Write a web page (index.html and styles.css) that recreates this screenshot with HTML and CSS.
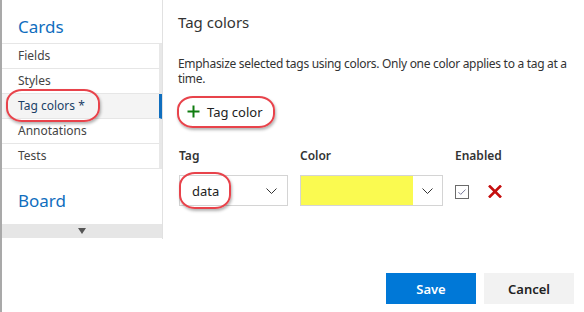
FILE: index.html
```html
<!DOCTYPE html>
<html lang="en">
<head>
    <meta charset="UTF-8">
    <meta name="viewport" content="width=device-width, initial-scale=1.0">
    <title>Settings - Tag colors</title>
    <link rel="stylesheet" href="styles.css">
</head>
<body>
    <div class="frame">
        <aside class="sidebar">
            <h2 class="nav-title">Cards</h2>
            <ul class="nav-list">
                <li>Fields</li>
                <li>Styles</li>
                <li class="selected"><span class="marked">Tag colors *</span></li>
                <li>Annotations</li>
                <li>Tests</li>
            </ul>
            <h2 class="nav-title board">Board</h2>
            <div class="scroll-down"><span class="arrow"></span></div>
        </aside>

        <main class="content">
            <h1>Tag colors</h1>
            <p class="desc">Emphasize selected tags using colors. Only one color applies to a tag at a time.</p>

            <div class="add-row">
                <button class="add-btn marked">
                    <svg width="13" height="13" viewBox="0 0 13 13">
                        <path d="M6.5 0.5v12M0.5 6.5h12" stroke="#107c10" stroke-width="2" fill="none"/>
                    </svg>
                    <span>Tag color</span>
                </button>
            </div>

            <div class="rules">
                <div class="col-label">Tag</div>
                <div class="col-label">Color</div>
                <div class="col-label">Enabled</div>

                <div class="select">
                    <span class="marked">data</span>
                    <svg class="chevron" width="11" height="6" viewBox="0 0 11 6">
                        <path d="M0.5 0.5l5 5l5-5" stroke="#333" stroke-width="1" fill="none"/>
                    </svg>
                </div>
                <div class="select color-select">
                    <span class="swatch"></span>
                    <svg class="chevron" width="11" height="6" viewBox="0 0 11 6">
                        <path d="M0.5 0.5l5 5l5-5" stroke="#333" stroke-width="1" fill="none"/>
                    </svg>
                </div>
                <div class="enabled">
                    <svg width="14" height="14" viewBox="0 0 14 14">
                        <rect x="0.5" y="0.5" width="13" height="13" fill="#fff" stroke="#6b6b6b"/>
                        <path d="M3.5 7.2l2.2 2.2l4.8-4.8" stroke="#7a7a9a" stroke-width="1" fill="none"/>
                    </svg>
                    <svg class="remove" width="14" height="13" viewBox="0 0 14 13">
                        <path d="M1 0.5l12 12M13 0.5l-12 12" stroke="#c50f0f" stroke-width="2.6" fill="none"/>
                    </svg>
                </div>
            </div>

            <div class="actions">
                <button class="button primary">Save</button>
                <button class="button">Cancel</button>
            </div>
        </main>
    </div>
</body>
</html>
```

FILE: styles.css
```css
* {
    margin: 0;
    padding: 0;
    box-sizing: border-box;
    font-family: 'Segoe UI', 'Noto Sans', sans-serif;
}

body {
    width: 584px;
    height: 312px;
    background-color: white;
    color: #333;
    overflow: hidden;
}

.frame {
    display: flex;
    height: 312px;
    border-left: 2px solid #a9a9a9;
}

/* left navigation */
.sidebar {
    width: 161px;
    height: 239px;
    flex-shrink: 0;
    border-right: 1px solid #e1e1e1;
    display: flex;
    flex-direction: column;
}

.nav-title {
    font-size: 17px;
    font-weight: 400;
    line-height: 24px;
    color: #106ebe;
    padding: 15px 16px 4px;
}

.nav-title.board {
    padding: 20px 16px 11px;
}

.nav-list {
    list-style: none;
    border-top: 1px solid #e6e6e6;
}

.nav-list li {
    height: 25px;
    line-height: 24px;
    font-size: 12px;
    padding-left: 16px;
    color: #444;
    border-bottom: 1px solid #e6e6e6;
    border-right: 3px solid #e8e8e8;
}

.nav-list li.selected {
    background-color: #f4f4f4;
    border-right-color: #106ebe;
    color: #1a3f66;
}

.scroll-down {
    height: 14px;
    background-color: #e6e6e6;
    display: flex;
    justify-content: center;
    align-items: center;
}

.arrow {
    width: 0;
    height: 0;
    border-left: 4px solid transparent;
    border-right: 4px solid transparent;
    border-top: 6px solid #555;
}

/* red callouts drawn over the screenshot */
.marked {
    position: relative;
}

.marked::after {
    content: "";
    position: absolute;
    border: 2.5px solid #e8434b;
    border-radius: 16px / 14px;
    box-shadow: 1px 2px 3px rgba(0, 0, 0, 0.3);
}

.nav-list .marked::after {
    left: -12px;
    right: -15px;
    top: -8px;
    bottom: -8px;
}

.add-btn.marked::after {
    left: -10px;
    right: -12px;
    top: -6px;
    bottom: -6px;
}

.select .marked::after {
    left: -13px;
    right: -12px;
    top: -10px;
    bottom: -9px;
}

/* right panel */
.content {
    flex: 1;
    display: flex;
    flex-direction: column;
    padding: 12px 10px 8px 15px;
}

.content h1 {
    font-size: 15px;
    font-weight: 400;
    line-height: 20px;
    color: #333;
}

.desc {
    margin-top: 24px;
    font-size: 12px;
    line-height: 15px;
    letter-spacing: -0.3px;
    color: #333;
}

.add-row {
    margin-top: 15px;
    padding-left: 9px;
}

.add-btn {
    display: inline-flex;
    align-items: center;
    gap: 7px;
    background: none;
    border: none;
    font-size: 13px;
    line-height: 20px;
    color: #222;
}

.rules {
    margin-top: 25px;
    padding-left: 1px;
    display: grid;
    grid-template-columns: 109px 143px auto;
    column-gap: 12px;
    row-gap: 11px;
    align-items: center;
}

.col-label {
    font-size: 12px;
    font-weight: 600;
    line-height: 16px;
    color: #333;
}

.select {
    height: 31px;
    border: 1px solid #d4d4d4;
    display: flex;
    align-items: center;
    justify-content: space-between;
    padding: 0 10px 0 12px;
    font-size: 13px;
    color: #222;
}

.color-select {
    padding: 0 9px 0 0;
}

.swatch {
    width: 112px;
    height: 29px;
    background-color: #fafa50;
}

.enabled {
    display: flex;
    align-items: center;
    gap: 19px;
    padding-top: 2px;
}

.actions {
    margin-top: auto;
    display: flex;
    justify-content: flex-end;
    gap: 8px;
}

.button {
    width: 90px;
    height: 31px;
    border: none;
    background-color: #f2f2f2;
    color: #222;
    font-size: 13px;
    font-weight: 600;
}

.button.primary {
    background-color: #0078d7;
    color: white;
}
```
